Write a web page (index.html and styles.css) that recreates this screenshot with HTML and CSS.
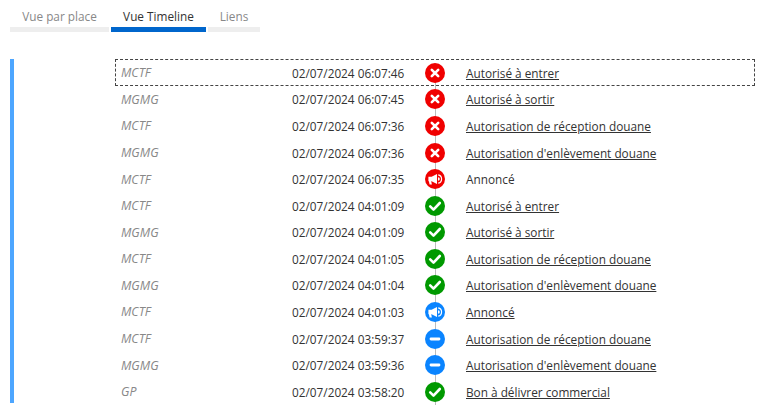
FILE: index.html
```html
<!DOCTYPE html>
<html lang="en">

<head>
    <meta charset="UTF-8">
    <title>Vue Timeline</title>
    <link rel="stylesheet" href="styles.css">
</head>

<body>
    <svg class="defs" width="0" height="0">
        <symbol id="ico-cross" viewBox="0 0 20 20">
            <path d="M6.8 6.8l6.4 6.4M13.2 6.8l-6.4 6.4" fill="none" stroke="#fff" stroke-width="2.6" stroke-linecap="round"/>
        </symbol>
        <symbol id="ico-check" viewBox="0 0 20 20">
            <path d="M5.2 10.4l3.3 3.2 6.3-6.6" fill="none" stroke="#fff" stroke-width="2.6" stroke-linecap="round" stroke-linejoin="round"/>
        </symbol>
        <symbol id="ico-minus" viewBox="0 0 20 20">
            <path d="M6 10h8" fill="none" stroke="#fff" stroke-width="2.8" stroke-linecap="round"/>
        </symbol>
        <symbol id="ico-horn" viewBox="0 0 20 20">
            <path d="M3.4 7.8h3.2l5.4-2.8v10l-5.4-2.8h-.4l.7 3.2H4.6l-.7-3.2h-.5z" fill="#fff"/>
            <path d="M13.2 5.8a4.3 4.3 0 0 1 0 8.4" fill="none" stroke="#fff" stroke-width="1.2"/>
            <path d="M13 8.2a1.8 1.8 0 0 1 0 3.6z" fill="#fff"/>
        </symbol>
    </svg>

    <div class="tabs">
        <div class="tab tab-place">Vue par place</div>
        <div class="tab tab-timeline active">Vue Timeline</div>
        <div class="tab tab-links">Liens</div>
    </div>

    <div class="timeline">
        <div class="rows">
            <div class="row focused">
                <span class="who">MCTF</span><span class="when">02/07/2024 06:07:46</span>
                <span class="dot red"><svg><use href="#ico-cross"/></svg></span>
                <a class="what" href="#">Autorisé à entrer</a>
            </div>
            <div class="row">
                <span class="who">MGMG</span><span class="when">02/07/2024 06:07:45</span>
                <span class="dot red"><svg><use href="#ico-cross"/></svg></span>
                <a class="what" href="#">Autorisé à sortir</a>
            </div>
            <div class="row">
                <span class="who">MCTF</span><span class="when">02/07/2024 06:07:36</span>
                <span class="dot red"><svg><use href="#ico-cross"/></svg></span>
                <a class="what" href="#">Autorisation de réception douane</a>
            </div>
            <div class="row">
                <span class="who">MGMG</span><span class="when">02/07/2024 06:07:36</span>
                <span class="dot red"><svg><use href="#ico-cross"/></svg></span>
                <a class="what" href="#">Autorisation d'enlèvement douane</a>
            </div>
            <div class="row">
                <span class="who">MCTF</span><span class="when">02/07/2024 06:07:35</span>
                <span class="dot red"><svg><use href="#ico-horn"/></svg></span>
                <span class="what plain">Annoncé</span>
            </div>
            <div class="row">
                <span class="who">MCTF</span><span class="when">02/07/2024 04:01:09</span>
                <span class="dot green"><svg><use href="#ico-check"/></svg></span>
                <a class="what" href="#">Autorisé à entrer</a>
            </div>
            <div class="row">
                <span class="who">MGMG</span><span class="when">02/07/2024 04:01:09</span>
                <span class="dot green"><svg><use href="#ico-check"/></svg></span>
                <a class="what" href="#">Autorisé à sortir</a>
            </div>
            <div class="row">
                <span class="who">MCTF</span><span class="when">02/07/2024 04:01:05</span>
                <span class="dot green"><svg><use href="#ico-check"/></svg></span>
                <a class="what" href="#">Autorisation de réception douane</a>
            </div>
            <div class="row">
                <span class="who">MGMG</span><span class="when">02/07/2024 04:01:04</span>
                <span class="dot green"><svg><use href="#ico-check"/></svg></span>
                <a class="what" href="#">Autorisation d'enlèvement douane</a>
            </div>
            <div class="row">
                <span class="who">MCTF</span><span class="when">02/07/2024 04:01:03</span>
                <span class="dot blue"><svg><use href="#ico-horn"/></svg></span>
                <a class="what" href="#">Annoncé</a>
            </div>
            <div class="row">
                <span class="who">MCTF</span><span class="when">02/07/2024 03:59:37</span>
                <span class="dot blue"><svg><use href="#ico-minus"/></svg></span>
                <a class="what" href="#">Autorisation de réception douane</a>
            </div>
            <div class="row">
                <span class="who">MGMG</span><span class="when">02/07/2024 03:59:36</span>
                <span class="dot blue"><svg><use href="#ico-minus"/></svg></span>
                <a class="what" href="#">Autorisation d'enlèvement douane</a>
            </div>
            <div class="row">
                <span class="who">GP</span><span class="when">02/07/2024 03:58:20</span>
                <span class="dot green"><svg><use href="#ico-check"/></svg></span>
                <a class="what" href="#">Bon à délivrer commercial</a>
            </div>
        </div>
    </div>
</body>

</html>
```

FILE: styles.css
```css
body {
    font-family: "Open Sans", "Noto Sans", sans-serif;
    font-size: 11.8px;
    margin: 0;
    height: 411px;
    overflow: hidden;
    background-color: #fff;
    color: #333;
}

.defs {
    position: absolute;
}

.tabs {
    display: flex;
    gap: 2px;
    padding: 6px 0 0 10px;
}

.tab {
    height: 21px;
    line-height: 21px;
    text-align: center;
    color: #888;
    border-bottom: 5px solid #eee;
}

.tab-place {
    width: 99px;
}

.tab-timeline {
    width: 95px;
}

.tab-links {
    width: 52px;
}

.tab.active {
    color: #333;
    border-bottom-color: #0066cc;
}

.timeline {
    margin: 27px 0 0 10px;
    width: 745px;
    height: 344px;
    border-left: 4px solid #4da6ff;
    box-sizing: border-box;
}

.rows {
    margin-left: 101px;
    background: linear-gradient(#bbb, #bbb) no-repeat 320px 14px / 1px 100%;
}

.row {
    display: flex;
    align-items: center;
    height: 26.58px;
    padding-top: 1px;
    box-sizing: border-box;
    border: 1px solid transparent;
}

.row.focused {
    border: 1px dashed #444;
}

.who {
    width: 176px;
    padding-left: 5px;
    box-sizing: border-box;
    font-size: 12.4px;
    color: #888;
    font-style: italic;
}

.when {
    width: 133px;
}

.dot {
    width: 20px;
    height: 20px;
    border-radius: 50%;
    flex: none;
}

.dot svg {
    display: block;
    width: 20px;
    height: 20px;
}

.red {
    background-color: #f00000;
}

.green {
    background-color: #009900;
}

.blue {
    background-color: #0a84ff;
}

.what {
    margin-left: 21px;
    color: #333;
}

.what.plain {
    text-decoration: none;
}
```
